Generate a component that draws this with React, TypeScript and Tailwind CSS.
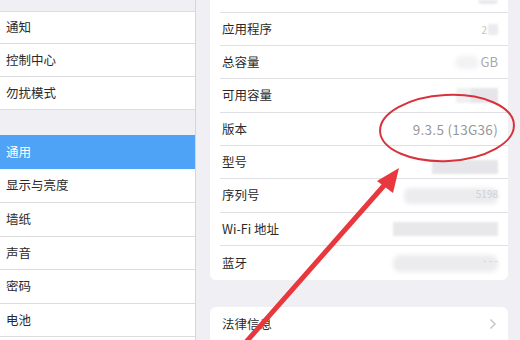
import React from "react";

const font = { fontFamily: '"Noto Sans CJK SC", "Noto Sans", sans-serif' };

function LeftRow({ label, h, active }: { label: string; h: string; active?: boolean }) {
  return (
    <div
      className={
        active
          ? `${h} shrink-0 flex items-center pl-[6px] bg-[#4fa3f7] text-white text-[12.5px]`
          : `${h} shrink-0 flex items-center pl-[6px] bg-white text-[#2a2a2a] text-[12.5px] border-b border-[#dcdce0]`
      }
    >
      {label}
    </div>
  );
}

function RightRow({ label, h, children, last }: { label: string; h: string; children?: React.ReactNode; last?: boolean }) {
  return (
    <div className={`${h} shrink-0 ml-[10px] flex items-center justify-between pr-[10px] ${last ? "" : "border-b border-[#e0e0e4]"}`}>
      <span className="text-[12.5px] text-[#2a2a2a] pl-[2px]">{label}</span>
      <div className="flex items-center text-[12.5px] text-[#8e8e93]">{children}</div>
    </div>
  );
}

export default function App() {
  return (
    <div className="relative w-[520px] h-[340px] overflow-hidden bg-[#efeff4] flex" style={font}>
      {/* Left column */}
      <div className="w-[196px] shrink-0 flex flex-col border-r border-[#d6d6da] bg-[#efeff4]">
        <div className="h-[12px] shrink-0 border-b border-[#dcdce0]" />
        <LeftRow label="通知" h="h-[32px]" />
        <LeftRow label="控制中心" h="h-[33px]" />
        <LeftRow label="勿扰模式" h="h-[33px]" />
        <div className="h-[25px] shrink-0" />
        <LeftRow label="通用" h="h-[34px]" active />
        <LeftRow label="显示与亮度" h="h-[34px]" />
        <LeftRow label="墙纸" h="h-[34px]" />
        <LeftRow label="声音" h="h-[33px]" />
        <LeftRow label="密码" h="h-[34px]" />
        <LeftRow label="电池" h="h-[33px]" />
        <div className="h-[34px] shrink-0 bg-white" />
      </div>

      {/* Right column */}
      <div className="flex-1 flex flex-col pl-[14px] pr-[12px]">
        <div className="bg-white rounded-b-[6px] flex flex-col shrink-0">
          <div className="h-[13px] shrink-0 ml-[10px] border-b border-[#e0e0e4] flex justify-end pr-[10px]">
            <div className="w-[20px] h-[4px] bg-[#e8e8ec] rounded-b-full blur-[1px]" />
          </div>
          <RightRow label="应用程序" h="h-[33px]">
            <span className="text-[#c4c4c8] mr-[1px] text-[10px]">2</span>
            <div className="w-[10px] h-[11px] bg-[#ececf0] blur-[1px]" />
          </RightRow>
          <RightRow label="总容量" h="h-[33px]">
            <div className="w-[24px] h-[13px] bg-[#f2f2f4] rounded-full blur-[2px] mr-[2px]" />
            <span className="text-[#a8a8ac] text-[13px]">GB</span>
          </RightRow>
          <RightRow label="可用容量" h="h-[34px]">
            <div className="w-[14px] h-[15px] bg-[#f0f0f2] blur-[1px]" />
            <div className="w-[28px] h-[15px] bg-[#e6e6ea] blur-[1px]" />
          </RightRow>
          <RightRow label="版本" h="h-[33px]">
            <span className="text-[#97979b] text-[13.5px] tracking-[0.3px]">9.3.5 (13G36)</span>
          </RightRow>
          <RightRow label="型号" h="h-[33px]">
            <div className="w-[66px] h-[14px] mt-[10px] bg-[#e6e6ea] blur-[1px]" />
          </RightRow>
          <RightRow label="序列号" h="h-[34px]">
            <div className="relative w-[94px] h-[16px]">
              <div className="absolute inset-0 bg-[#ececef] rounded-[6px] blur-[2px]" />
              <span className="absolute right-0 top-[-2px] text-[10px] text-[#d0d0d4]">5198</span>
            </div>
          </RightRow>
          <RightRow label="Wi-Fi 地址" h="h-[33px]">
            <div className="w-[105px] h-[14px] bg-[#e8e8eb] blur-[1px]" />
          </RightRow>
          <RightRow label="蓝牙" h="h-[34px]" last>
            <div className="relative w-[105px] h-[17px]">
              <div className="absolute inset-0 bg-[#ececef] rounded-[7px] blur-[2px]" />
              <span className="absolute right-0 top-[-3px] text-[10px] text-[#d0d0d4]">- - -</span>
            </div>
          </RightRow>
        </div>

        <div className="mt-[27px] shrink-0 bg-white rounded-t-[6px] flex flex-col">
          <RightRow label="法律信息" h="h-[34px]" last>
            <svg width="8" height="12" viewBox="0 0 8 12" className="mr-[1px]">
              <path d="M1.5 1.5 L6 6 L1.5 10.5" fill="none" stroke="#c7c7cc" strokeWidth="1.5" />
            </svg>
          </RightRow>
        </div>
      </div>

      {/* Red annotations */}
      <svg className="absolute inset-0 pointer-events-none" width="520" height="340" viewBox="0 0 520 340">
        <ellipse cx="447" cy="128" rx="67" ry="33" fill="none" stroke="#d8333c" strokeWidth="2" transform="rotate(-3 447 128)" />
        <line x1="246" y1="342" x2="388" y2="181" stroke="#e8383e" strokeWidth="5" strokeLinecap="round" />
        <polygon points="399,168 377,181 393,193" fill="#e8383e" />
      </svg>
    </div>
  );
}
